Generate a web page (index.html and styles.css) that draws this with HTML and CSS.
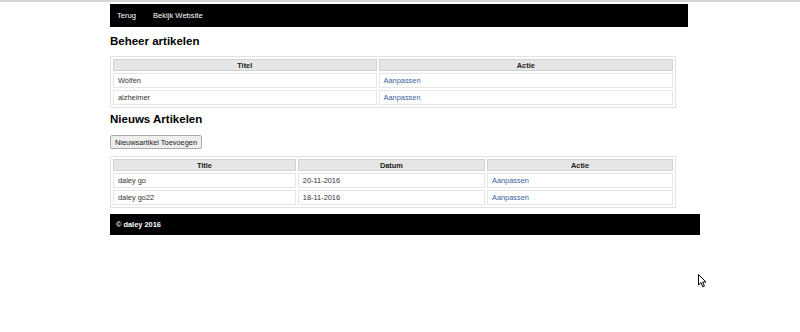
FILE: index.html
```html
<!DOCTYPE html>
<html lang="nl">
<head>
    <meta charset="UTF-8">
    <title>Beheer</title>
    <link rel="stylesheet" href="styles.css">
</head>
<body>
    <div class="topline"></div>
    <div class="wrapper">
        <div class="nav">
            <a href="#">Terug</a>
            <a href="#">Bekijk Website</a>
        </div>

        <h2>Beheer artikelen</h2>
        <table class="overview">
            <tr>
                <th>Titel</th>
                <th>Actie</th>
            </tr>
            <tr>
                <td>Wolfen</td>
                <td><a href="#">Aanpassen</a></td>
            </tr>
            <tr>
                <td>alzheimer</td>
                <td><a href="#">Aanpassen</a></td>
            </tr>
        </table>

        <h2>Nieuws Artikelen</h2>
        <button class="add-btn">Nieuwsartikel Toevoegen</button>
        <table class="overview">
            <tr>
                <th>Title</th>
                <th>Datum</th>
                <th>Actie</th>
            </tr>
            <tr>
                <td>daley go</td>
                <td>20-11-2016</td>
                <td><a href="#">Aanpassen</a></td>
            </tr>
            <tr>
                <td>daley go22</td>
                <td>18-11-2016</td>
                <td><a href="#">Aanpassen</a></td>
            </tr>
        </table>

        <div class="footer">&copy; daley 2016</div>
    </div>

    <!-- mouse pointer from the screenshot -->
    <svg class="cursor" width="9" height="14" viewBox="0 0 9 14">
        <path d="M0.5 0.5 L0.5 11 L3 8.6 L4.8 12.8 L6.4 12.1 L4.7 8 L8 8 Z" fill="#fff" stroke="#000" stroke-width="1"/>
    </svg>
</body>
</html>
```

FILE: styles.css
```css
body {
    margin: 0;
    padding: 0;
    font-family: "Liberation Sans", Arial, sans-serif;
    font-size: 7.4px;
    color: #333;
    background: #fff;
}
.topline {
    height: 2px;
    background: #d4d4d4;
    border-bottom: 2px solid #fff;
}
.wrapper {
    margin-left: 110px;
    width: 590px;
}
.nav {
    width: 578px;
    height: 23px;
    background: #000;
    display: flex;
    align-items: center;
    gap: 17px;
    padding-left: 7px;
    box-sizing: border-box;
    margin-bottom: 8px;
}
.nav a {
    color: #fff;
    text-decoration: none;
    font-size: 7.6px;
}
h2 {
    font-size: 11.5px;
    font-weight: bold;
    color: #000;
    margin: 4px 0 9px 0;
}
.overview {
    width: 566px;
    border: 1px solid #e2e2e2;
    border-spacing: 2px;
    margin-bottom: 5px;
}
.overview th {
    background: #e6e6e6;
    border: 1px solid #d2d2d2;
    font-weight: bold;
    height: 10px;
    padding: 0 4px;
    color: #222;
}
.overview td {
    border: 1px solid #e6e6e6;
    height: 13px;
    padding: 0 4px;
}
.overview a {
    color: #3a5f9e;
    text-decoration: none;
}
.add-btn {
    font-family: "Liberation Sans", Arial, sans-serif;
    font-size: 7.4px;
    height: 14px;
    padding: 0 4px;
    background: #eee;
    border: 1px solid #aaa;
    border-radius: 2px;
    margin: 10px 0 7px 0;
    display: block;
    color: #222;
}
.footer {
    background: #000;
    color: #fff;
    font-weight: bold;
    height: 21px;
    line-height: 21px;
    padding-left: 6px;
    margin-top: 6px;
}
.cursor {
    position: absolute;
    left: 698px;
    top: 274px;
}
```
